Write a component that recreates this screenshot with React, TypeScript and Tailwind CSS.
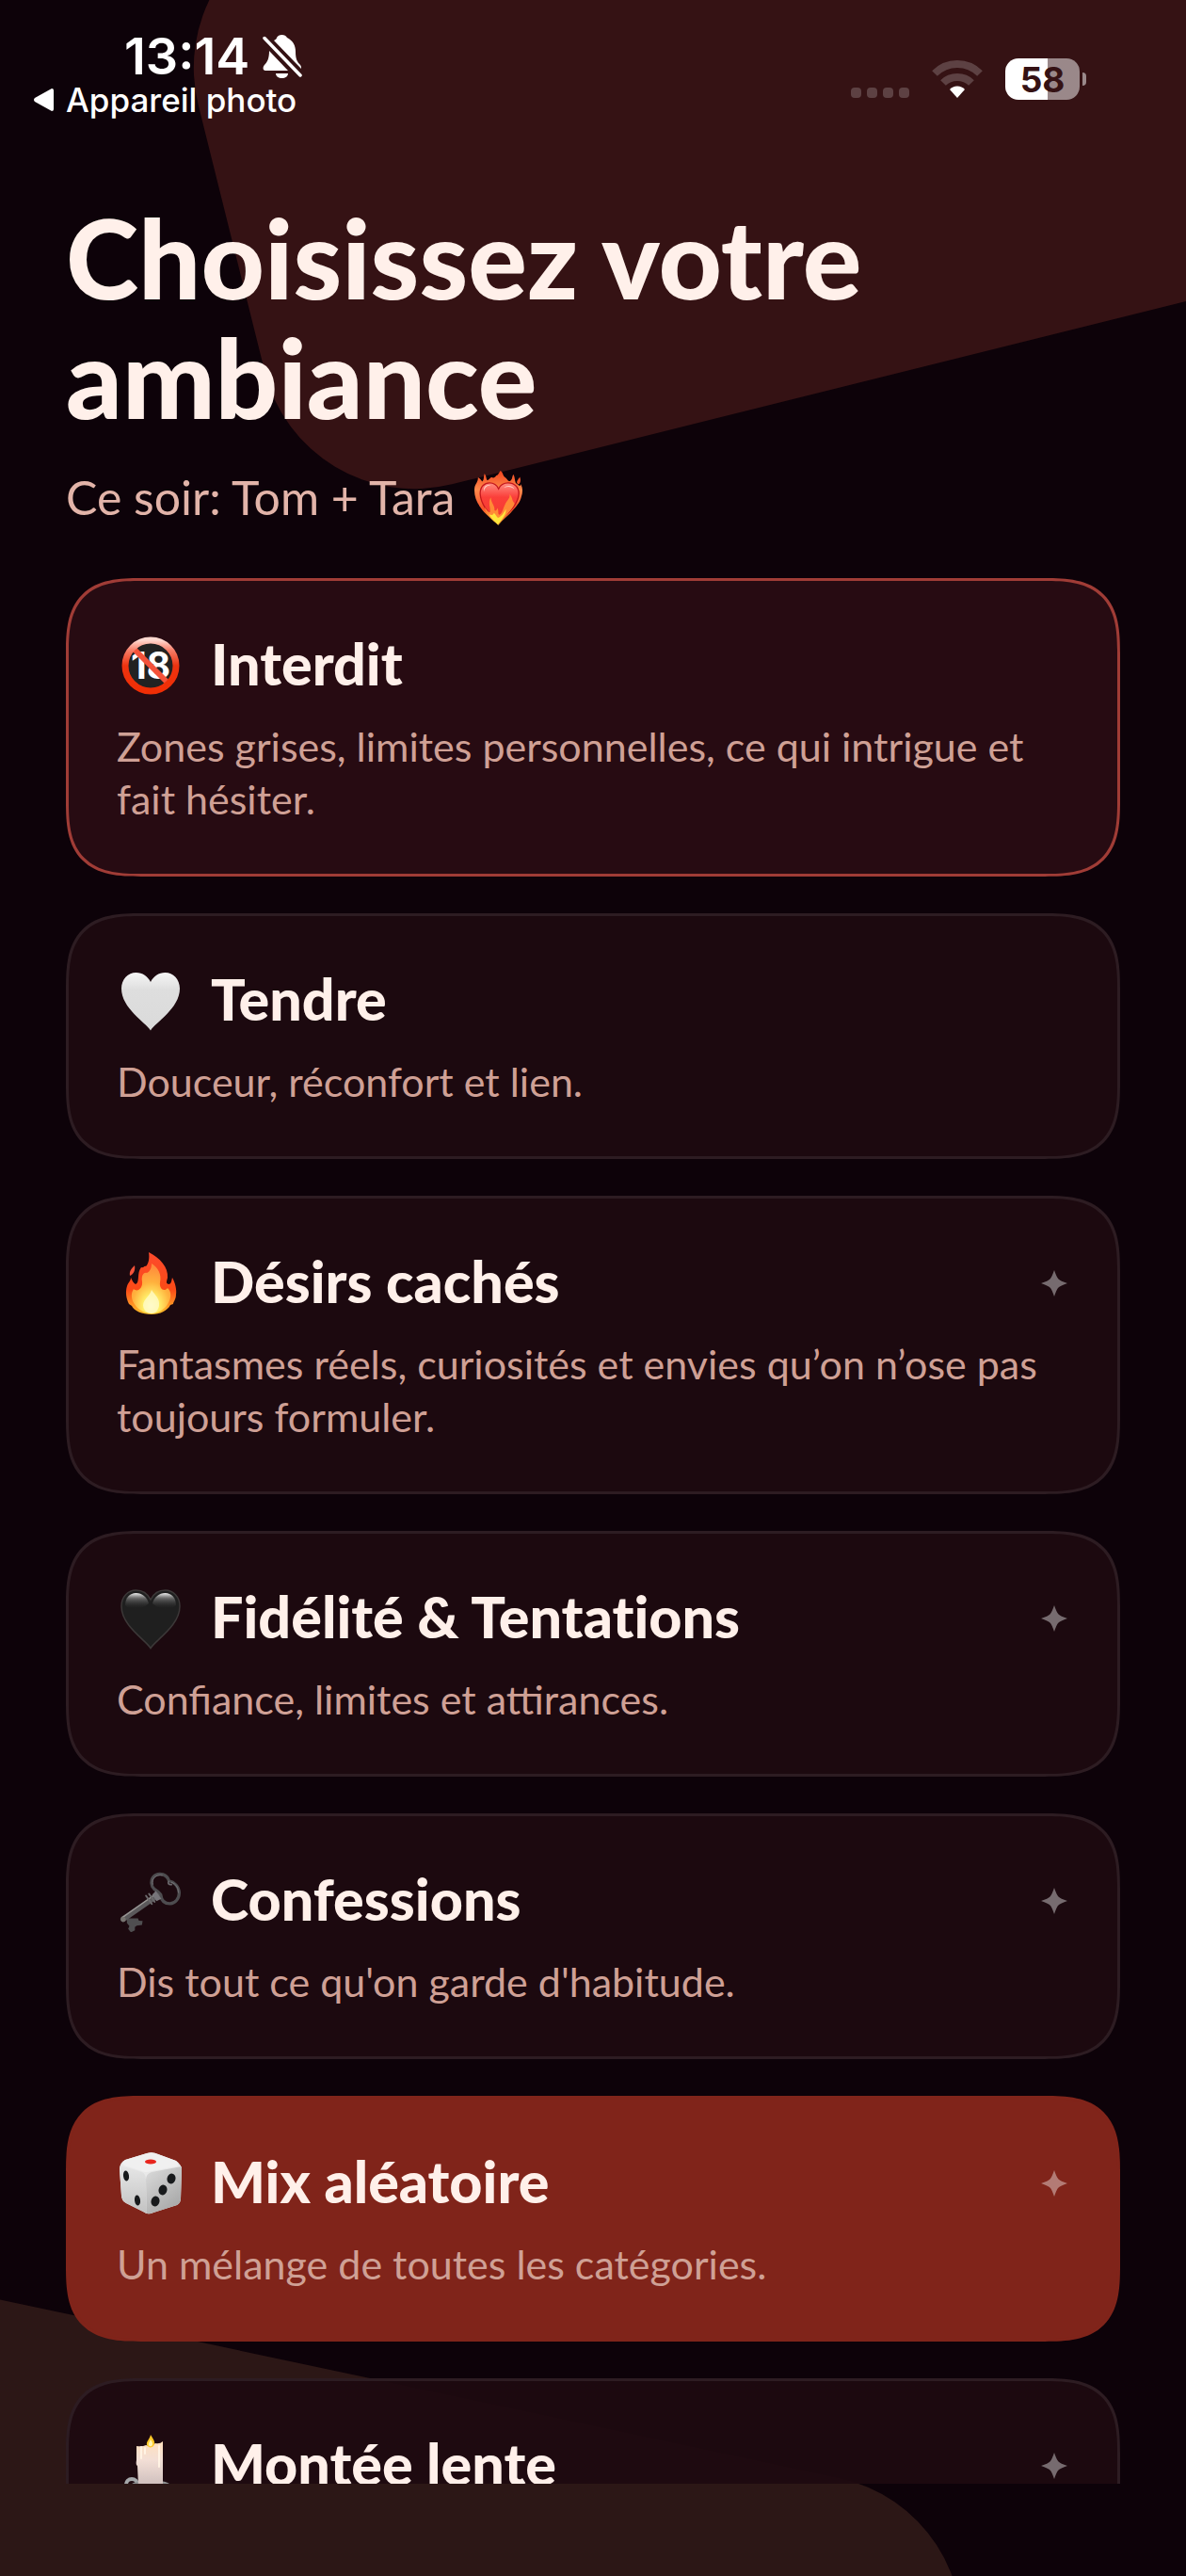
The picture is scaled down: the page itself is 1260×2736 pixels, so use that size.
import type { ReactNode } from "react";

type Mood = {
  title: string;
  description: string;
  icon: ReactNode;
  locked?: boolean;
  tone?: "forbidden" | "mix";
};

function AdultIcon() {
  return (
    <svg viewBox="0 0 66 66" className="size-[66px]" aria-hidden="true">
      <defs>
        <linearGradient id="adult-ring" x1="0" y1="0" x2="0" y2="1">
          <stop offset="0" stopColor="#ffd9d0" />
          <stop offset="0.2" stopColor="#f77c66" />
          <stop offset="0.5" stopColor="#ec3310" />
          <stop offset="1" stopColor="#f02e05" />
        </linearGradient>
      </defs>
      <circle cx="33" cy="33" r="26" fill="#222" />
      <text
        x="33"
        y="47"
        textAnchor="middle"
        fontFamily="Inter, sans-serif"
        fontSize="39"
        fontWeight="700"
        fill="#fff"
      >
        18
      </text>
      <path d="M14 14 52 52" stroke="#f4523a" strokeWidth="6" />
      <circle cx="33" cy="33" r="27" fill="none" stroke="url(#adult-ring)" strokeWidth="7" />
    </svg>
  );
}

function WhiteHeartIcon() {
  return (
    <svg viewBox="0 0 66 66" className="size-[66px]" aria-hidden="true">
      <defs>
        <linearGradient id="white-heart" x1="0" y1="0" x2="0" y2="1">
          <stop offset="0" stopColor="#f6f6f6" />
          <stop offset="0.3" stopColor="#dedede" />
          <stop offset="1" stopColor="#dadada" />
        </linearGradient>
      </defs>
      <path
        d="M33 64.500C28 56 2 41 2 20 2 10 9 3 17.500 3 24.500 3 30 7 33 13 36 7 41.500 3 48.500 3 57 3 64 10 64 20 64 41 38 56 33 64.500Z"
        fill="url(#white-heart)"
      />
    </svg>
  );
}

function FireIcon() {
  return (
    <svg viewBox="0 0 66 66" className="size-[66px]" aria-hidden="true">
      <defs>
        <radialGradient id="fire-inner" cx="0.5" cy="0.85" r="0.8">
          <stop offset="0" stopColor="#fffbd0" />
          <stop offset="0.25" stopColor="#fff06a" />
          <stop offset="0.6" stopColor="#ffb13d" />
          <stop offset="1" stopColor="#ff8a3c" />
        </radialGradient>
        <linearGradient id="fire-outer" x1="0" y1="0" x2="0" y2="1">
          <stop offset="0" stopColor="#fd4a2c" />
          <stop offset="0.6" stopColor="#fb4a17" />
          <stop offset="1" stopColor="#ffc22b" />
        </linearGradient>
      </defs>
      <path
        d="M31 0C43 6 52 16 51 27 50 31 49 33 52 34 55 34 55 31 56 27 59 32 61 40 60 45 60 50 57 53 57 55L54 56C51 62 43 66 34 66 24 66 15 62 13 57L10 55C7 49 6 42 8 36 9 32 12 31 12 27 14 31 15 33 17 34 22 32 18 22 23 16 26 17 26 14 28 15 31 12 32 6 31 0Z"
        fill="url(#fire-outer)"
      />
      <path d="M16 14C13 17 10 20 11 25 15 23 17 19 16 14Z" fill="#f5533a" />
      <path
        d="M34 12C41 16 45 24 43 32 42 38 47 43 51 38 56 42 55 50 50 57 46 62 40 65 34 65 25 65 18 60 14 52 12 46 13 42 15 39 19 43 25 38 24 31 23 26 25 21 29 22 33 20 34 16 34 12Z"
        fill="url(#fire-inner)"
      />
      <path d="M34 40C38 46 43 49 42 57 41 62 38 65 34 65 29 65 25 61 25 56 26 49 32 47 34 40Z" fill="#fffac8" opacity="0.8" />
    </svg>
  );
}

function BlackHeartIcon() {
  return (
    <svg viewBox="0 0 66 66" className="size-[66px]" aria-hidden="true">
      <defs>
        <linearGradient id="black-heart-shine" x1="0" y1="0" x2="0" y2="1">
          <stop offset="0" stopColor="#fff" stopOpacity="0.95" />
          <stop offset="0.35" stopColor="#999" stopOpacity="0.55" />
          <stop offset="1" stopColor="#222" stopOpacity="0" />
        </linearGradient>
      </defs>
      <path
        d="M33 64.500C28 56 2 41 2 20 2 10 9 3 17.500 3 24.500 3 30 7 33 13 36 7 41.500 3 48.500 3 57 3 64 10 64 20 64 41 38 56 33 64.500Z"
        fill="#1f1f1f"
        stroke="#3c3838"
        strokeWidth="1.500"
      />
      <path d="M6 19C6 11 11 6 17.500 6 24 6 29 10 31 17 24 24 11 25 6 19Z" fill="url(#black-heart-shine)" />
      <path d="M35 17C37 10 42 6 48.500 6 55 6 60 11 60 19 55 25 42 24 35 17Z" fill="url(#black-heart-shine)" />
    </svg>
  );
}

function KeyIcon() {
  return (
    <svg viewBox="36 38 202 202" className="size-[66px]" aria-hidden="true">
      <path
        d="M160 108C144 100 136 86 141 70 146 54 162 49 177 53 189 57 194 64 197 74 214 77 229 93 230 112 230 131 218 147 200 148 182 148 172 137 170 119Z"
        fill="none"
        stroke="#4d4c4f"
        strokeWidth="10"
        strokeLinejoin="round"
      />
      <path
        d="M144 86C139 66 154 52 176 56M204 78C221 84 228 99 227 113"
        fill="none"
        stroke="#77757a"
        strokeWidth="3"
      />
      <path d="M197 74C191 82 196 88 207 85" fill="none" stroke="#6a686c" strokeWidth="5" />
      <path d="M60 196 96 196 99 203 111 204 109 217 92 219 86 224 86 235 73 241 64 230 68 221 60 211Z" fill="#4f4e50" />
      <path d="M48 198 158 122" stroke="#5b595b" strokeWidth="18" strokeLinecap="round" />
      <path d="M45 193 150 119" stroke="#9b9896" strokeWidth="4" strokeLinecap="round" />
      <path d="M154 106 172 132 156 140 142 119Z" fill="#77757a" />
      <path d="M122 122 141 149M132 116 150 142" stroke="#6b696b" strokeWidth="6" strokeLinecap="round" />
      <circle cx="48" cy="199" r="8" fill="#77736f" />
    </svg>
  );
}

function DiceIcon() {
  return (
    <svg viewBox="0 0 66 66" className="size-[66px]" aria-hidden="true">
      <defs>
        <linearGradient id="dice-right" x1="0" y1="0" x2="0.6" y2="1">
          <stop offset="0" stopColor="#dcdcdc" />
          <stop offset="1" stopColor="#a9a9a9" />
        </linearGradient>
        <linearGradient id="dice-left" x1="0" y1="0" x2="0" y2="1">
          <stop offset="0" stopColor="#e6e6e6" />
          <stop offset="1" stopColor="#c2c2c2" />
        </linearGradient>
      </defs>
      <path
        d="M29 1Q35-1 41 2L60 9Q66 13 66 19L65 49Q65 54 61 56L36 64Q30 67 25 63L7 54Q2 51 2 46L0 18Q0 11 6 8Z"
        fill="#e9e9e9"
      />
      <path d="M1 14 24 21Q28 23 28 29L29 65 7 54Q2 51 2 46L0 18Z" fill="url(#dice-left)" />
      <path d="M66 15 34 21Q28 23 28 29L29 65Q32 66 36 64L61 56Q65 54 65 49L66 19Z" fill="url(#dice-right)" />
      <path d="M29 1Q35-1 41 2L60 9Q65 13 60 15L33 20Q28 22 24 20L5 14Q1 11 6 8Z" fill="#f0f0f0" />
      <ellipse cx="33" cy="10" rx="6" ry="2.500" fill="#e8251d" />
      <g fill="#181a1c">
        <ellipse cx="7" cy="25" rx="3" ry="5.500" transform="rotate(-8 7 25)" />
        <ellipse cx="19" cy="51" rx="3" ry="5.500" transform="rotate(-8 19 51)" />
        <ellipse cx="55" cy="28" rx="4.500" ry="5.500" transform="rotate(14 55 28)" />
        <ellipse cx="46" cy="40" rx="4.500" ry="5.500" transform="rotate(14 46 40)" />
        <ellipse cx="38" cy="52" rx="4.500" ry="5.500" transform="rotate(14 38 52)" />
      </g>
    </svg>
  );
}

function CandleIcon() {
  return (
    <svg viewBox="0 0 66 66" className="size-[66px]" aria-hidden="true">
      <defs>
        <linearGradient id="candle-body" x1="0" y1="0" x2="0" y2="1">
          <stop offset="0" stopColor="#ffe0bd" />
          <stop offset="0.4" stopColor="#f3dfd6" />
          <stop offset="1" stopColor="#cbbcbb" />
        </linearGradient>
      </defs>
      <circle cx="13" cy="53" r="6" fill="none" stroke="#a5a8aa" strokeWidth="4" />
      <ellipse cx="33" cy="55" rx="22" ry="7" fill="#8f9193" />
      <path
        d="M18 12Q24 13 28 11 34 13 38 9 43 10 46 7L46 54Q33 58 20 54L19 33Q17 33 18 27Z"
        fill="url(#candle-body)"
      />
      <path d="M23 13V25M27 14V20M42 12V34" stroke="#fff3e4" strokeWidth="2" strokeLinecap="round" />
      <path d="M33 0C36 5 39 8 36 12 34 14 31 14 29 11 28 7 32 5 33 0Z" fill="#ffc928" />
      <path d="M33 5C35 8 36 10 34 12 32 13 30 11 31 9Z" fill="#fff5b0" />
    </svg>
  );
}

function BurningHeartIcon() {
  return (
    <svg viewBox="35 26 162 178" className="h-[59px] w-[54px]" aria-hidden="true">
      <defs>
        <linearGradient id="burning-flames" x1="0" y1="0" x2="0" y2="1">
          <stop offset="0" stopColor="#f1431d" />
          <stop offset="0.35" stopColor="#ff8a4c" />
          <stop offset="0.7" stopColor="#f7512a" />
          <stop offset="1" stopColor="#ffd934" />
        </linearGradient>
        <linearGradient id="burning-heart" x1="0" y1="0" x2="0" y2="1">
          <stop offset="0" stopColor="#ff8d82" />
          <stop offset="0.35" stopColor="#fb3f3a" />
          <stop offset="1" stopColor="#f23a2a" />
        </linearGradient>
      </defs>
      <path
        d="M114 203C100 188 70 168 56 145 42 126 36 104 38 84 40 70 50 66 49 50 56 55 60 58 62 64 70 58 66 48 70 38 77 46 74 54 79 60 86 58 86 50 95 50 98 54 104 50 108 44 116 42 116 34 121 29 130 34 128 46 136 50 144 56 144 64 152 62 160 56 158 48 162 40 168 48 166 58 170 68 182 76 184 82 186 72 193 84 193 98 188 112 186 124 176 140 164 152 148 172 128 186 114 203Z"
        fill="url(#burning-flames)"
      />
      <path d="M174 68C172 60 180 56 183 49 188 60 184 72 178 73Z" fill="#f1532a" />
      <path
        d="M114 198C100 180 58 146 56 102 56 80 70 68 86 68 100 68 110 76 115 87 120 76 132 68 146 68 166 68 180 82 180 102 178 146 126 180 114 198Z"
        fill="url(#burning-heart)"
        stroke="#c3161c"
        strokeWidth="4"
      />
      <path d="M68 96C64 80 78 72 90 75 80 76 70 82 68 96ZM132 84C140 74 160 74 166 88 156 79 144 78 132 84Z" fill="#ffd0c8" />
      <path
        d="M113 202C96 186 76 172 70 146 80 158 82 162 88 162 90 146 80 132 90 114 92 134 104 140 102 156 106 160 110 152 112 148 116 160 112 168 118 170 130 162 130 142 142 126 150 118 152 110 150 104 162 116 158 130 166 132 166 146 140 170 113 202Z"
        fill="#ff8a36"
      />
      <path
        d="M113 202C104 192 92 184 84 168 92 172 98 172 100 164 106 168 108 176 113 180 124 176 132 164 138 152 142 164 128 184 113 202Z"
        fill="#ffe63c"
      />
    </svg>
  );
}

function Sparkle() {
  return (
    <svg viewBox="0 0 28 28" className="mr-[2px] size-[28px] fill-white/40" aria-hidden="true">
      <path d="M14 0Q16.500 7.500 18.500 9.500 20.500 11.500 28 14 20.500 16.500 18.500 18.500 16.500 20.500 14 28 11.500 20.500 9.500 18.500 7.500 16.500 0 14 7.500 11.500 9.500 9.500 11.500 7.500 14 0Z" />
    </svg>
  );
}

function BellOff() {
  return (
    <svg viewBox="0 0 42 46" className="h-[46px] w-[42px] fill-white" aria-hidden="true">
      <path d="M12 6C14 5 15 4 15 3 16 1 18 0 20.500 0 23 0 25 1 26 3 32 6 35 11 35 18 35 26 37 29 40 32 41 33 41 35 41 36Z" />
      <path d="M7 17 27 38H3C0 38 0 34 2 32 5 29 7 25 7 17Z" />
      <path d="M14 41H27C27 44 24 46 20.500 46 17 46 14 44 14 41Z" />
      <path d="M2 3.500 40 43" stroke="#351214" strokeWidth="7" />
      <path d="M2 3.500 40 43" stroke="#fff" strokeWidth="3.500" strokeLinecap="round" />
    </svg>
  );
}

function Wifi() {
  return (
    <svg viewBox="0 0 54 40" className="h-[40px] w-[54px]" aria-hidden="true">
      <g fill="none" stroke="#fff" strokeOpacity="0.2" strokeWidth="8">
        <path d="M3 14Q13 4 27 4 41 4 51 14" />
        <path d="M12 24Q18 18 27 18 36 18 42 24" />
      </g>
      <path d="M27 40 19 31Q22 27.500 27 27.500 32 27.500 35 31Z" fill="#fff" />
    </svg>
  );
}

function StatusBar() {
  return (
    <div className="flex h-[210px] justify-between pl-[35px] pr-[106px] font-[Inter,sans-serif]">
      <div className="pt-[30px]">
        <div className="flex h-[60px] items-center gap-[14px] pl-[97px]">
          <span className="text-[54px] font-semibold leading-[60px]">13:14</span>
          <BellOff />
        </div>
        <a href="#camera" className="flex h-8 items-center gap-[13px] text-[35px] font-medium leading-8">
          <svg viewBox="0 0 22 24" className="h-6 w-[22px] fill-white" aria-hidden="true">
            <path d="M20 0Q22 0 22 2V22Q22 24 20 24L2 14Q0 12 2 10Z" />
          </svg>
          Appareil photo
        </a>
      </div>
      <div className="flex items-start pt-[62px]">
        <div className="flex h-[44px] items-end gap-6">
          <div className="flex gap-[6px] pb-[2px]">
            <span className="size-[11px] rounded-[4px] bg-white/20" />
            <span className="size-[11px] rounded-[4px] bg-white/20" />
            <span className="size-[11px] rounded-[4px] bg-white/20" />
            <span className="size-[11px] rounded-[4px] bg-white/20" />
          </div>
          <div className="pb-[2px]">
            <Wifi />
          </div>
          <div className="flex items-center gap-[3px]">
            <span className="flex h-[44px] w-[79px] items-center justify-center rounded-[14px] bg-linear-to-r from-white from-57% to-white/50 to-57% text-[37px] font-bold leading-none text-[#351214]">
              58
            </span>
            <span className="h-[14px] w-1 rounded-r-full bg-white/50" />
          </div>
        </div>
      </div>
    </div>
  );
}

const moods: Mood[] = [
  {
    title: "Interdit",
    description: "Zones grises, limites personnelles, ce qui intrigue et fait hésiter.",
    icon: <AdultIcon />,
    tone: "forbidden",
  },
  { title: "Tendre", description: "Douceur, réconfort et lien.", icon: <WhiteHeartIcon /> },
  {
    title: "Désirs cachés",
    description: "Fantasmes réels, curiosités et envies qu’on n’ose pas toujours formuler.",
    icon: <FireIcon />,
    locked: true,
  },
  {
    title: "Fidélité & Tentations",
    description: "Confiance, limites et attirances.",
    icon: <BlackHeartIcon />,
    locked: true,
  },
  {
    title: "Confessions",
    description: "Dis tout ce qu'on garde d'habitude.",
    icon: <KeyIcon />,
    locked: true,
  },
  {
    title: "Mix aléatoire",
    description: "Un mélange de toutes les catégories.",
    icon: <DiceIcon />,
    locked: true,
    tone: "mix",
  },
  {
    title: "Montée lente",
    description: "",
    icon: <CandleIcon />,
    locked: true,
  },
];

const tones = {
  default: "border-[#2d1c22] bg-[#1e0a10]/95",
  forbidden: "border-[#a03c36] bg-[#270b12]",
  mix: "border-[#80241a] bg-[#80241a]",
};

function MoodCard({ mood }: { mood: Mood }) {
  return (
    <button
      type="button"
      className={`block w-full shrink-0 rounded-[80px] border-[3px] px-[51px] py-[51px] text-left [corner-shape:superellipse(1.5)] ${tones[mood.tone ?? "default"]}`}
    >
      <span className="flex h-[78px] items-center">
        <span className="flex w-[72px] justify-center">{mood.icon}</span>
        <span className="ml-7 flex-1 pb-1 text-[61px] font-black leading-[74px] text-[#fff0ea] [font-variant-ligatures:none]">
          {mood.title}
        </span>
        {mood.locked && <Sparkle />}
      </span>
      <span className="mt-[19px] block min-h-[56px] text-[43px] leading-[56px] text-[#cfa095]">
        {mood.description}
      </span>
    </button>
  );
}

export default function App() {
  return (
    <div className="relative flex h-screen flex-col overflow-hidden bg-[#0d0209] font-[Lato,sans-serif] text-white">
      <div className="absolute left-[321px] top-[-66px] h-[620px] w-[1500px] origin-bottom-left -rotate-14 rounded-[164px] bg-[#351214]" />
      <div className="absolute -bottom-[530px] right-[208px] h-[600px] w-[1500px] origin-top-right rotate-12 rounded-[164px] bg-[#2c1716]" />

      <div className="relative flex min-h-0 flex-1 flex-col">
        <StatusBar />
        <header className="px-[70px]">
          <h1 className="max-w-[1000px] text-[117px] font-black leading-[127px] text-[#fff0ea]">
            Choisissez votre ambiance
          </h1>
          <p className="mt-[34px] flex h-[60px] items-center gap-5 text-[50px] leading-[60px] text-[#e2b4a9]">
            Ce soir: Tom + Tara
            <BurningHeartIcon />
          </p>
        </header>
        <main className="mb-[98px] mt-[56px] flex min-h-0 flex-1 flex-col gap-[39px] overflow-hidden px-[70px]">
          {moods.map((mood) => (
            <MoodCard key={mood.title} mood={mood} />
          ))}
        </main>
      </div>
    </div>
  );
}
